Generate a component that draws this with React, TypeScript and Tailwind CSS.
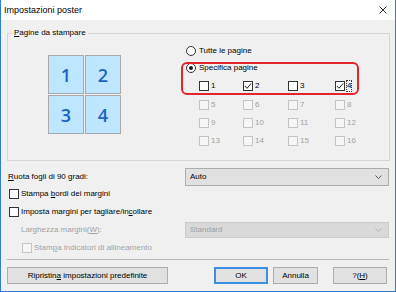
import React from "react";

type CheckProps = {
  label: React.ReactNode;
  checked?: boolean;
  disabled?: boolean;
  focus?: boolean;
};

// Win10-style checkbox
function Check({ label, checked, disabled, focus }: CheckProps) {
  return (
    <div className="flex items-center">
      <span
        className={`w-[10px] h-[10px] border flex items-center justify-center shrink-0 ${
          disabled ? "border-[#c4c4c4] bg-[#f6f6f6]" : "border-[#333333] bg-white"
        }`}
      >
        {checked && (
          <svg width="8" height="8" viewBox="0 0 8 8">
            <polyline points="0.8,4 3,6.3 7.2,1.4" fill="none" stroke="#222" strokeWidth="1" />
          </svg>
        )}
      </span>
      <span
        className={`ml-[2px] ${disabled ? "text-[#a3a3a3]" : ""} ${
          focus ? "outline outline-1 outline-dotted outline-[#333333]" : ""
        }`}
      >
        {label}
      </span>
    </div>
  );
}

function Radio({ label, checked }: { label: string; checked?: boolean }) {
  return (
    <div className="flex items-center h-full pl-[5px]">
      <span className="w-[10px] h-[10px] rounded-full border border-[#333333] bg-white flex items-center justify-center">
        {checked && <span className="w-[4px] h-[4px] rounded-full bg-[#1a1a1a]" />}
      </span>
      <span className="ml-[3px]">{label}</span>
    </div>
  );
}

function Dropdown({ value, disabled }: { value: string; disabled?: boolean }) {
  return (
    <div
      className={`w-[204px] border flex items-center justify-between pl-[4px] pr-[6px] ${
        disabled
          ? "h-[16px] bg-[#d9d9d9] border-[#cccccc] text-[#a0a0a0]"
          : "h-[18px] bg-[#e1e1e1] border-[#adadad]"
      }`}
    >
      <span>{value}</span>
      <svg width="7" height="4" viewBox="0 0 7 4">
        <polyline
          points="0.5,0.5 3.5,3.5 6.5,0.5"
          fill="none"
          stroke={disabled ? "#b0b0b0" : "#555"}
          strokeWidth="1"
        />
      </svg>
    </div>
  );
}

const pageRows = [
  [5, 6, 7, 8],
  [9, 10, 11, 12],
  [13, 14, 15, 16],
];

export default function App() {
  return (
    <div className="w-[396px] h-[292px] flex flex-col border-x border-b border-[#2b7fd4] bg-[#f0f0f0] font-['Liberation_Sans',Arial,sans-serif] text-[8px] leading-[10px] text-black overflow-hidden">
      {/* title bar */}
      <div className="h-[20px] bg-white flex items-center justify-between pl-[3px] pr-[8px] shrink-0">
        <span className="text-[9px]">Impostazioni poster</span>
        <svg width="8" height="8" viewBox="0 0 8 8">
          <line x1="0.5" y1="0.5" x2="7.5" y2="7.5" stroke="#333" strokeWidth="1" />
          <line x1="7.5" y1="0.5" x2="0.5" y2="7.5" stroke="#333" strokeWidth="1" />
        </svg>
      </div>

      <div className="flex-1 px-[6px]">
        <fieldset className="mt-[7px] w-[383px] h-[134px] border border-[#d5d5d5]">
          <legend className="ml-[4px] px-[2px] leading-[12px]">
            <u>P</u>agine da stampare
          </legend>
          <div className="flex">
            <div className="w-[173px] pl-[40px] pt-[16px]">
              <div className="grid grid-cols-[36px_36px] gap-[1px]">
                {[1, 2, 3, 4].map((n) => (
                  <div
                    key={n}
                    className="h-[39px] bg-[#bfe6ff] border border-[#a9a9a9] flex items-center justify-center font-['Open_Sans',sans-serif] font-semibold text-[18px] text-[#1b63c6]"
                  >
                    {n}
                  </div>
                ))}
              </div>
            </div>

            <div className="relative flex flex-col pt-[3px] w-[200px]">
              <div className="h-[17px]">
                <Radio label="Tutte le pagine" />
              </div>
              <div className="h-[17px]">
                <Radio label="Specifica pagine" checked />
              </div>
              <div className="h-[20px] grid grid-cols-[44px_45px_47px_40px] items-center pl-[18px]">
                <Check label="1" />
                <Check label="2" checked />
                <Check label="3" />
                <Check label="4" checked focus />
              </div>
              {pageRows.map((row, i) => (
                <div key={i} className="h-[18px] grid grid-cols-[44px_45px_47px_40px] items-center pl-[18px]">
                  {row.map((n) => (
                    <Check key={n} label={String(n)} disabled />
                  ))}
                </div>
              ))}
              {/* highlight around the page selection */}
              <div className="absolute left-0 top-[23px] w-[178px] h-[33px] border-2 border-[#e3242b] rounded-[6px]" />
            </div>
          </div>
        </fieldset>

        <div className="flex items-center h-[17px] mt-[7px]">
          <span className="w-[178px] pl-[1px]">
            <u>R</u>uota fogli di 90 gradi:
          </span>
          <Dropdown value="Auto" />
        </div>
        <div className="h-[18px] flex items-center pl-[2px]">
          <Check
            label={
              <>
                Stampa <u>b</u>ordi dei margini
              </>
            }
          />
        </div>
        <div className="h-[18px] flex items-center pl-[2px]">
          <Check
            label={
              <>
                Imposta margini per tagliare/in<u>c</u>ollare
              </>
            }
          />
        </div>
        <div className="h-[18px] flex items-center">
          <span className="w-[178px] pl-[14px] text-[#a0a0a0]">
            Larghezza margini(<u>W</u>):
          </span>
          <Dropdown value="Standard" disabled />
        </div>
        <div className="h-[18px] flex items-center pl-[15px]">
          <Check
            disabled
            label={
              <>
                Stam<u>p</u>a indicatori di allineamento
              </>
            }
          />
        </div>

        <div className="mt-[2px] h-px w-[382px] bg-[#b9b9b9]" />

        <div className="mt-[7px] flex h-[17px]">
          <button className="w-[161px] bg-[#e1e1e1] border border-[#adadad]">
            Ripristin<u>a</u> impostazioni predefinite
          </button>
          <button className="ml-[46px] w-[54px] bg-[#e1e1e1] border-2 border-[#3b8ee0]">OK</button>
          <button className="ml-[5px] w-[45px] bg-[#e1e1e1] border border-[#adadad]">Annulla</button>
          <button className="ml-[15px] w-[54px] bg-[#e1e1e1] border border-[#adadad]">
            ?(<u>H</u>)
          </button>
        </div>
      </div>
    </div>
  );
}
